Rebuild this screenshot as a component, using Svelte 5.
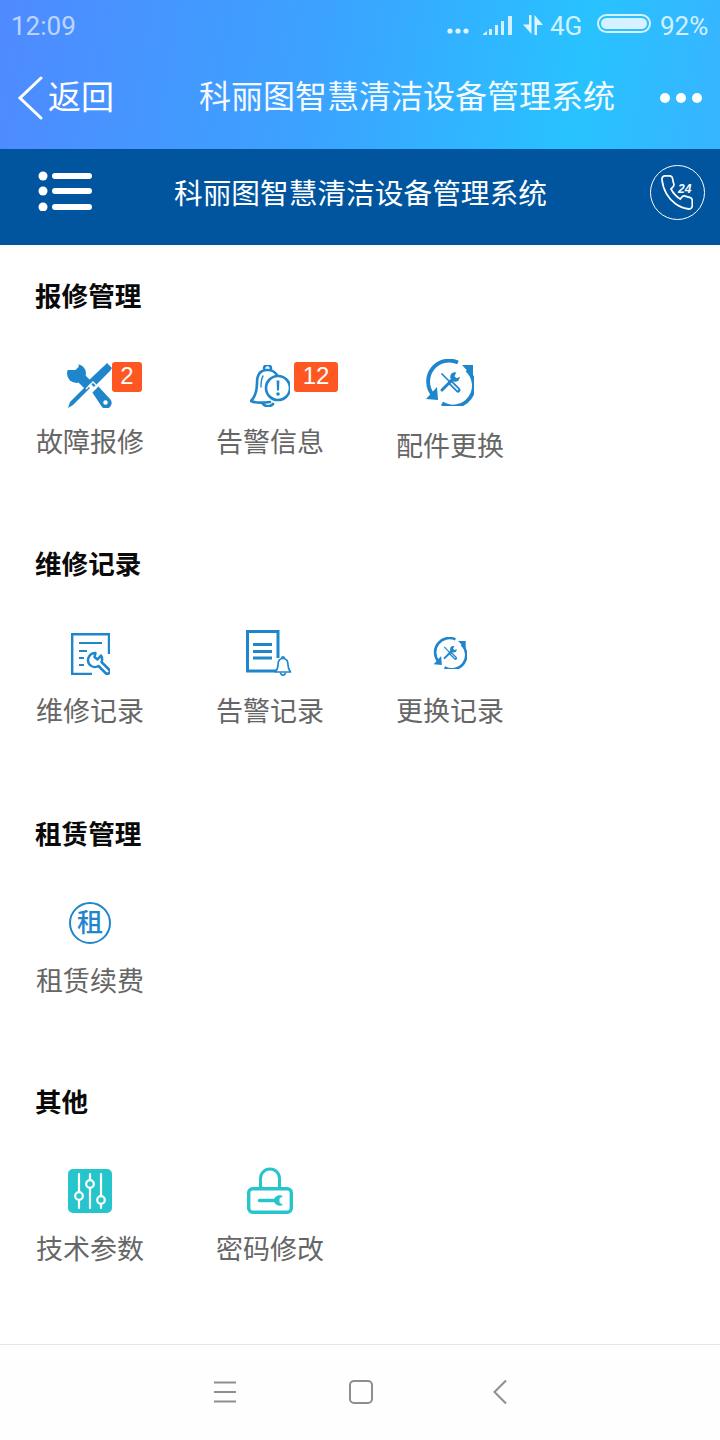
<script>
  const sections = [
    { title: '报修管理', items: [
      { key: 'repair', label: '故障报修', badge: '2' },
      { key: 'alarm', label: '告警信息', badge: '12' },
      { key: 'parts', label: '配件更换' }
    ]},
    { title: '维修记录', items: [
      { key: 'record', label: '维修记录' },
      { key: 'alarmlog', label: '告警记录' },
      { key: 'replace', label: '更换记录' }
    ]},
    { title: '租赁管理', items: [
      { key: 'rent', label: '租赁续费' }
    ]},
    { title: '其他', items: [
      { key: 'param', label: '技术参数' },
      { key: 'pwd', label: '密码修改' }
    ]}
  ];
</script>

{#snippet tools()}
  <path class="fill" d="M40 0 L45 5 L43 8 L27 24 L21 18 L37 3 Z" />
  <path class="fill" d="M20 22 L23 25 L6 42 L1 45 L3 39 Z" />
  <circle class="fill" cx="9.5" cy="10.5" r="9.5" />
  <path class="cut" d="M-1 -1 H12 L11.5 4 L8.5 7 L4.5 7 L-1 7 Z" />
  <path class="fill" d="M9 17 L16 10 L25 19 L18 26 Z" />
  <path class="fill" d="M25 29 L31 23 L43 36 A5.5 5.5 0 0 1 35 44 Z" />
  <circle class="cut" cx="38.5" cy="39.5" r="2.2" />
  <path class="cutline" d="M19 26 L26 19 L31 24 M24 30 L30 24" />
{/snippet}

{#snippet cycle()}
  <path class="line" d="M32 3.5 A21 21 0 0 0 7 36" stroke-width="3.8" />
  <path class="fill" d="M0 40 L12 41 L11 28 Z" />
  <path class="line" d="M16 44.5 A21 21 0 0 0 41 11" stroke-width="3.8" />
  <path class="fill" d="M36 6 L47 6 L47 18 Z" />
  <g transform="translate(13.5 12.5)">
    <path class="line" stroke-width="1.7" d="M2 2 L10 10" />
    <path class="line" stroke-width="5" stroke-linecap="round" d="M11 11 L18.5 18.5" />
    <path class="cutline" stroke-width=".9" d="M11.5 11.5 L18.5 18.5" />
    <path class="line" stroke-width="3" stroke-linecap="round" d="M2.5 18.5 L13 8" />
    <circle class="fill" cx="15.5" cy="5.5" r="4.8" />
    <path class="cut" d="M15 4.7 L17.4 -.5 H22 V4.5 L17 6.8 Z" />
  </g>
{/snippet}

{#snippet icon(key)}
  {#if key === 'repair'}
    <svg class="ic" width="45" height="45" viewBox="0 0 45 45">{@render tools()}</svg>
  {:else if key === 'alarm'}
    <svg class="ic" width="40" height="42" viewBox="0 0 40 42">
      <path class="line" stroke-width="2.6" stroke-linecap="round" d="M17 5 C9 5 7 11 7 18 C7 27 5 32 1 36 C5 38 12 38 20 37" />
      <path class="line" stroke-width="2.6" stroke-linecap="round" d="M14 3.5 A3.5 3.5 0 0 1 21 3.5 M18 5 C22 5 25 7 27 10" />
      <path class="line" stroke-width="2.6" stroke-linecap="round" d="M13 39 C16 42 20 42 23 39" />
      <path class="line" stroke-width="1.4" stroke-linecap="round" d="M11 22 C11 17 11 14 13 11" />
      <circle cx="28" cy="23" r="12" fill="#fff" stroke="#1f86cc" stroke-width="2.6" />
      <path class="fill" d="M26.6 15.5 H29.4 L29 25.5 H27 Z" />
      <circle class="fill" cx="28" cy="29" r="1.8" />
    </svg>
  {:else if key === 'parts'}
    <svg class="ic" width="48" height="47" viewBox="0 0 48 47">{@render cycle()}</svg>
  {:else if key === 'record'}
    <svg class="ic" width="39" height="42" viewBox="0 0 39 42">
      <path class="line" stroke-width="2.4" d="M38 21 V1.2 H1.2 V41 H21" />
      <path class="line" stroke-width="2.2" d="M8 10 H31 M8 18 H16 M8 25 H13 M8 32 H13" />
      <path fill="#fff" stroke="#1f86cc" stroke-width="2.5" stroke-linejoin="round" d="M24.5 20 A7.2 7.2 0 0 0 18.5 31.5 A7.2 7.2 0 0 0 27.5 33 L34.5 40 A2.4 2.4 0 0 0 38 36.5 L30.5 29 A7.2 7.2 0 0 0 30 22.5 L26.5 26.5 L23.5 24 Z" />
    </svg>
  {:else if key === 'alarmlog'}
    <svg class="ic" width="48" height="47" viewBox="0 0 48 47">
      <path class="line" stroke-width="3" d="M30 41 H1.5 V1.5 H32 V28" />
      <path class="fill" d="M7 13 H26 V16 H7 Z M7 20 H26 V23 H7 Z M7 26.5 H26 V29.5 H7 Z" />
      <path fill="#fff" stroke="#1f86cc" stroke-width="1.7" stroke-linejoin="round" d="M37 28.5 C33 28.5 32 32 32 35 C32 38.5 31 40 29.5 42 H44.5 C43 40 42 38.5 42 35 C42 32 41 28.5 37 28.5 Z" />
      <path class="line" stroke-width="1.7" d="M34.5 42.5 C35 46 39 46 39.5 42.5 M35.5 28 A1.6 1.6 0 0 1 38.5 28" />
    </svg>
  {:else if key === 'replace'}
    <svg class="ic" width="34" height="32" viewBox="0 0 48 47">{@render cycle()}</svg>
  {:else if key === 'rent'}
    <span class="rent-ic">租</span>
  {:else if key === 'param'}
    <svg class="ic" width="44" height="44" viewBox="0 0 44 44">
      <rect width="44" height="44" rx="5" fill="#26c5cc" />
      <path d="M11 5 V39 M22 5 V39 M33 5 V39" stroke="#fff" stroke-width="2.2" fill="none" stroke-linecap="round" />
      <circle cx="11" cy="27" r="3.8" fill="#26c5cc" stroke="#fff" stroke-width="2.2" />
      <circle cx="22" cy="15" r="3.8" fill="#26c5cc" stroke="#fff" stroke-width="2.2" />
      <circle cx="33" cy="31" r="3.8" fill="#26c5cc" stroke="#fff" stroke-width="2.2" />
    </svg>
  {:else if key === 'pwd'}
    <svg class="ic" width="46" height="47" viewBox="0 0 46 47">
      <path d="M13.5 21 V11.5 A9.5 9.5 0 0 1 32.5 11.5 V21" fill="none" stroke="#26c5cc" stroke-width="3" />
      <rect x="1.7" y="21.7" width="42.6" height="23.6" rx="4" fill="none" stroke="#26c5cc" stroke-width="3.4" />
      <path d="M12.5 33.5 H28" stroke="#26c5cc" stroke-width="3.4" stroke-linecap="round" />
      <path d="M36 29 C31 27 27 30 27 33.5 C27 37 31 40 36 38 L32.5 35.5 V31.5 Z" fill="#26c5cc" />
    </svg>
  {/if}
{/snippet}

<div class="page">
  <header class="top">
    <div class="status">
      <span class="time">12:09</span>
      <div class="status-r">
        <svg width="22" height="6" viewBox="0 0 22 6" class="sdots">
          <circle cx="3" cy="3" r="2.6" /><circle cx="11" cy="3" r="2.6" /><circle cx="19" cy="3" r="2.6" />
        </svg>
        <svg class="signal" width="30" height="20" viewBox="0 0 30 20">
          <path d="M0 19 L4 16 V20 H0 Z M6 14 H9 V20 H6 Z M12 10 H15 V20 H12 Z M18 6 H21 V20 H18 Z M25 1 H29 V20 H25 Z" />
        </svg>
        <svg class="arrows" width="20" height="20" viewBox="0 0 20 20">
          <path d="M6 0 H8.5 V19 L0 9.5 H6 Z M11.5 0 L20 10 H14 V20 H11.5 Z" />
        </svg>
        <span class="net">4G</span>
        <span class="battery"><span class="level"></span></span>
        <span class="pct">92%</span>
      </div>
    </div>
    <div class="navbar">
      <svg class="back" width="26" height="44" viewBox="0 0 26 44">
        <path d="M24 2 L3 22 L24 42" fill="none" stroke="#fff" stroke-width="3" stroke-linecap="round" />
      </svg>
      <span class="back-t">返回</span>
      <span class="nav-title">科丽图智慧清洁设备管理系统</span>
      <svg class="more" width="42" height="10" viewBox="0 0 42 10">
        <circle cx="5" cy="5" r="5" /><circle cx="21" cy="5" r="5" /><circle cx="37" cy="5" r="5" />
      </svg>
    </div>
  </header>

  <div class="band">
    <svg class="list" width="54" height="40" viewBox="0 0 54 40">
      <circle cx="5" cy="5" r="4.5" /><circle cx="5" cy="20" r="4.5" /><circle cx="5" cy="36" r="4.5" />
      <rect x="14" y="2" width="40" height="6" rx="3" /><rect x="14" y="17" width="40" height="6" rx="3" /><rect x="14" y="33" width="40" height="6" rx="3" />
    </svg>
    <span class="band-title">科丽图智慧清洁设备管理系统</span>
    <div class="phone">
      <svg width="32" height="35" viewBox="1.5 1.5 21 21" preserveAspectRatio="none">
        <path d="M22 16.92v3a2 2 0 0 1-2.18 2 19.79 19.79 0 0 1-8.63-3.07 19.5 19.5 0 0 1-6-6 19.79 19.79 0 0 1-3.07-8.67A2 2 0 0 1 4.11 2h3a2 2 0 0 1 2 1.72 12.84 12.84 0 0 0 .7 2.81 2 2 0 0 1-.45 2.11L8.09 9.91a16 16 0 0 0 6 6l1.27-1.27a2 2 0 0 1 2.11-.45 12.84 12.84 0 0 0 2.81.7A2 2 0 0 1 22 16.92z" fill="none" stroke="#fff" stroke-width="1.1" />
      </svg>
      <span class="h24">24</span>
    </div>
  </div>

  <main class="main">
    {#each sections as s}
      <section class="section">
        <h2>{s.title}</h2>
        <div class="row">
          {#each s.items as it}
            <div class="item {it.key}">
              <div class="slot">
                {@render icon(it.key)}
                {#if it.badge}<span class="badge">{it.badge}</span>{/if}
              </div>
              <span class="label">{it.label}</span>
            </div>
          {/each}
        </div>
      </section>
    {/each}
  </main>

  <nav class="sysnav">
    <svg width="24" height="22" viewBox="0 0 24 22"><path d="M1 1.5 H23 M1 11 H23 M1 20.5 H23" stroke="#8e8e8e" stroke-width="2" fill="none" /></svg>
    <span class="sq"></span>
    <svg width="16" height="26" viewBox="0 0 16 26"><path d="M14 1.5 L2.5 13 L14 24.5" stroke="#8e8e8e" stroke-width="2" fill="none" /></svg>
  </nav>
</div>

<style>
  :global(body) { margin: 0; background: #fff; }
  .page {
    width: 720px; height: 1440px; display: flex; flex-direction: column;
    font-family: "Noto Sans CJK SC", "Noto Sans", sans-serif; overflow: hidden;
  }
  .top {
    height: 149px; flex: none;
    background: linear-gradient(100deg, #4f8aff 0%, #3ba3ff 45%, #28c2ff 80%, #38b4ff 100%);
    color: #fff;
  }
  .status { height: 50px; display: flex; align-items: center; justify-content: space-between; padding: 0 14px 0 11px; color: rgba(255,255,255,.65); font-family: Roboto, sans-serif; font-size: 26px; }
  .time { line-height: 50px; padding-top: 2px; }
  .status-r { display: flex; align-items: center; color: rgba(255,255,255,.8); }
  .sdots { fill: rgba(255,255,255,.85); margin: 12px 14px 0 -3px; }
  .signal { fill: rgba(255,255,255,.8); margin: 0 10px 1px 0; }
  .arrows { fill: rgba(255,255,255,.85); margin: 0 7px 1px 0; }
  .net { width: 47px; line-height: 50px; padding-top: 2px; }
  .battery { width: 54px; height: 19px; box-sizing: border-box; border: 2px solid rgba(255,255,255,.8); border-radius: 10px; padding: 2px; display: flex; margin: 0 9px 3px 0; }
  .level { flex: 1; background: #d6f1ff; border-radius: 6px; }
  .pct { width: 46px; line-height: 50px; padding-top: 2px; }
  .navbar { display: flex; align-items: center; height: 96px; margin-top: 0; padding-left: 17px; }
  .back { flex: none; }
  .back-t { width: 65px; margin: 0 0 6px 5px; font-size: 33px; line-height: 90px; white-space: nowrap; }
  .nav-title { margin: 0 0 8px 86px; width: 416px; font-size: 32px; white-space: nowrap; line-height: 88px; opacity: .95; }
  .more { fill: #fff; margin-left: 45px; flex: none; }

  .band {
    height: 96px; flex: none; box-sizing: border-box; background: #00559e; display: flex; align-items: center; color: #fff; padding: 0 0 10px 38px;
  }
  .list { fill: #fff; flex: none; margin-bottom: 3px; }
  .band-title { margin-left: 82px; width: 374px; font-size: 28.7px; white-space: nowrap; line-height: 86px; }
  .phone { position: relative; margin-left: 102px; width: 55px; height: 55px; box-sizing: border-box; border: 1.5px solid #fff; border-radius: 50%; display: flex; align-items: center; justify-content: center; }
  .phone svg { margin: 0 2px 0 0; }
  .h24 { position: absolute; left: 27px; top: 16px; font: italic 700 12px/14px "Liberation Sans", sans-serif; }

  .main { flex: 1; display: flex; flex-direction: column; }
  .section { height: 268px; flex: none; box-sizing: border-box; padding-top: 33px; }
  .section:nth-child(2) { height: 270px; }
  h2 { margin: 0 0 43px; padding-left: 35px; height: 34px; font-size: 26.6px; line-height: 34px; font-weight: 700; color: #0a0a0a; }
  .row { display: flex; }
  .item { width: 180px; display: flex; flex-direction: column; align-items: center; }
  .slot { position: relative; width: 180px; display: flex; flex-direction: column; align-items: center; }
  .label { font-size: 27px; line-height: 34px; height: 36px; color: #666; white-space: nowrap; }
  .badge {
    position: absolute; top: 7px; height: 30px; border-radius: 3px; background: #ff5722; color: #fff;
    font: 24px/28px "Liberation Sans", sans-serif; text-align: center;
  }
  .repair .slot { height: 69px; }
  .repair .ic { margin-top: 8px; margin-right: 1px; }
  .repair .badge { left: 112px; width: 30px; }
  .alarm .slot { height: 69px; }
  .alarm .ic { margin-top: 10px; }
  .alarm .badge { left: 114px; width: 44px; }
  .parts .slot { height: 73px; }
  .parts .ic { margin-top: 4px; }
  .record .slot { height: 70px; }
  .record .ic { margin-top: 10px; margin-left: 1px; }
  .alarmlog .slot { height: 70px; }
  .alarmlog .ic { margin-top: 7px; }
  .replace .slot { height: 70px; }
  .replace .ic { margin-top: 14px; }
  .rent .slot { height: 70px; }
  .rent-ic {
    margin-top: 9px; width: 42px; height: 42px; box-sizing: border-box; border: 2.6px solid #1f86cc; border-radius: 50%;
    color: #1f86cc; font-size: 26px; line-height: 34px; text-align: center; font-weight: 500;
  }
  .param .slot { height: 70px; }
  .param .ic { margin-top: 8px; }
  .pwd .slot { height: 70px; }
  .pwd .ic { margin-top: 6px; }

  .ic { display: block; flex: none; }
  .fill { fill: #1f86cc; }
  .cut { fill: #fff; }
  .cutline { fill: none; stroke: #fff; stroke-width: 1.4; }
  .line { fill: none; stroke: #1f86cc; }

  .sysnav { height: 96px; flex: none; box-sizing: border-box; border-top: 1.5px solid #e6e6e6; background: #fefefe; display: flex; align-items: center; padding: 0 0 2px 213px; }
  .sq { margin-left: 112px; width: 24px; height: 24px; box-sizing: border-box; border: 2px solid #8e8e8e; border-radius: 5px; }
  .sysnav svg:last-child { margin-left: 119px; }
</style>
